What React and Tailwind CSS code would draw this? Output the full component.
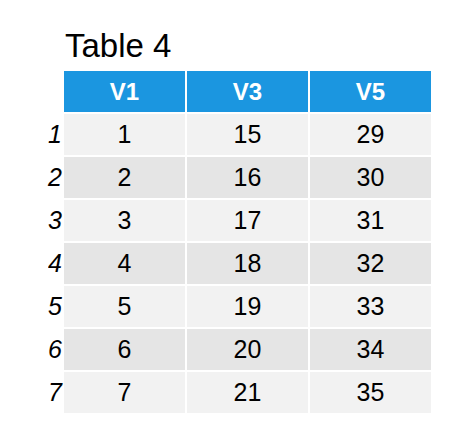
const columns = ['V1', 'V3', 'V5'];

const rows = [
  [1, 15, 29],
  [2, 16, 30],
  [3, 17, 31],
  [4, 18, 32],
  [5, 19, 33],
  [6, 20, 34],
  [7, 21, 35],
];

export default function App() {
  return (
    <div
      className="h-[437px] w-[474px] bg-white pt-[29px] text-black"
      style={{ fontFamily: '"Liberation Sans", Arial, sans-serif' }}
    >
      <h1 className="ml-[65px] text-[33px] leading-[33px] font-normal">Table 4</h1>

      <div className="mt-[9px] grid grid-cols-[62px_121px_121px_121px] gap-[2px]">
        <div />
        {columns.map((col) => (
          <div
            key={col}
            className="flex h-[41px] items-center justify-center bg-[#1b96e0] text-[24px] font-bold text-white"
          >
            {col}
          </div>
        ))}

        {rows.map((row, i) => {
          const bg = i % 2 === 0 ? 'bg-[#f2f2f2]' : 'bg-[#e5e5e5]';
          return [
            <div key={`n${i}`} className="flex h-[41px] items-center justify-end text-[25px] italic">
              <span className="inline-block scale-y-105">{i + 1}</span>
            </div>,
            ...row.map((value, j) => (
              <div
                key={`c${i}-${j}`}
                className={`flex h-[41px] items-center justify-center text-[25px] ${bg}`}
              >
                <span className="inline-block scale-y-105">{value}</span>
              </div>
            )),
          ];
        })}
      </div>
    </div>
  );
}
